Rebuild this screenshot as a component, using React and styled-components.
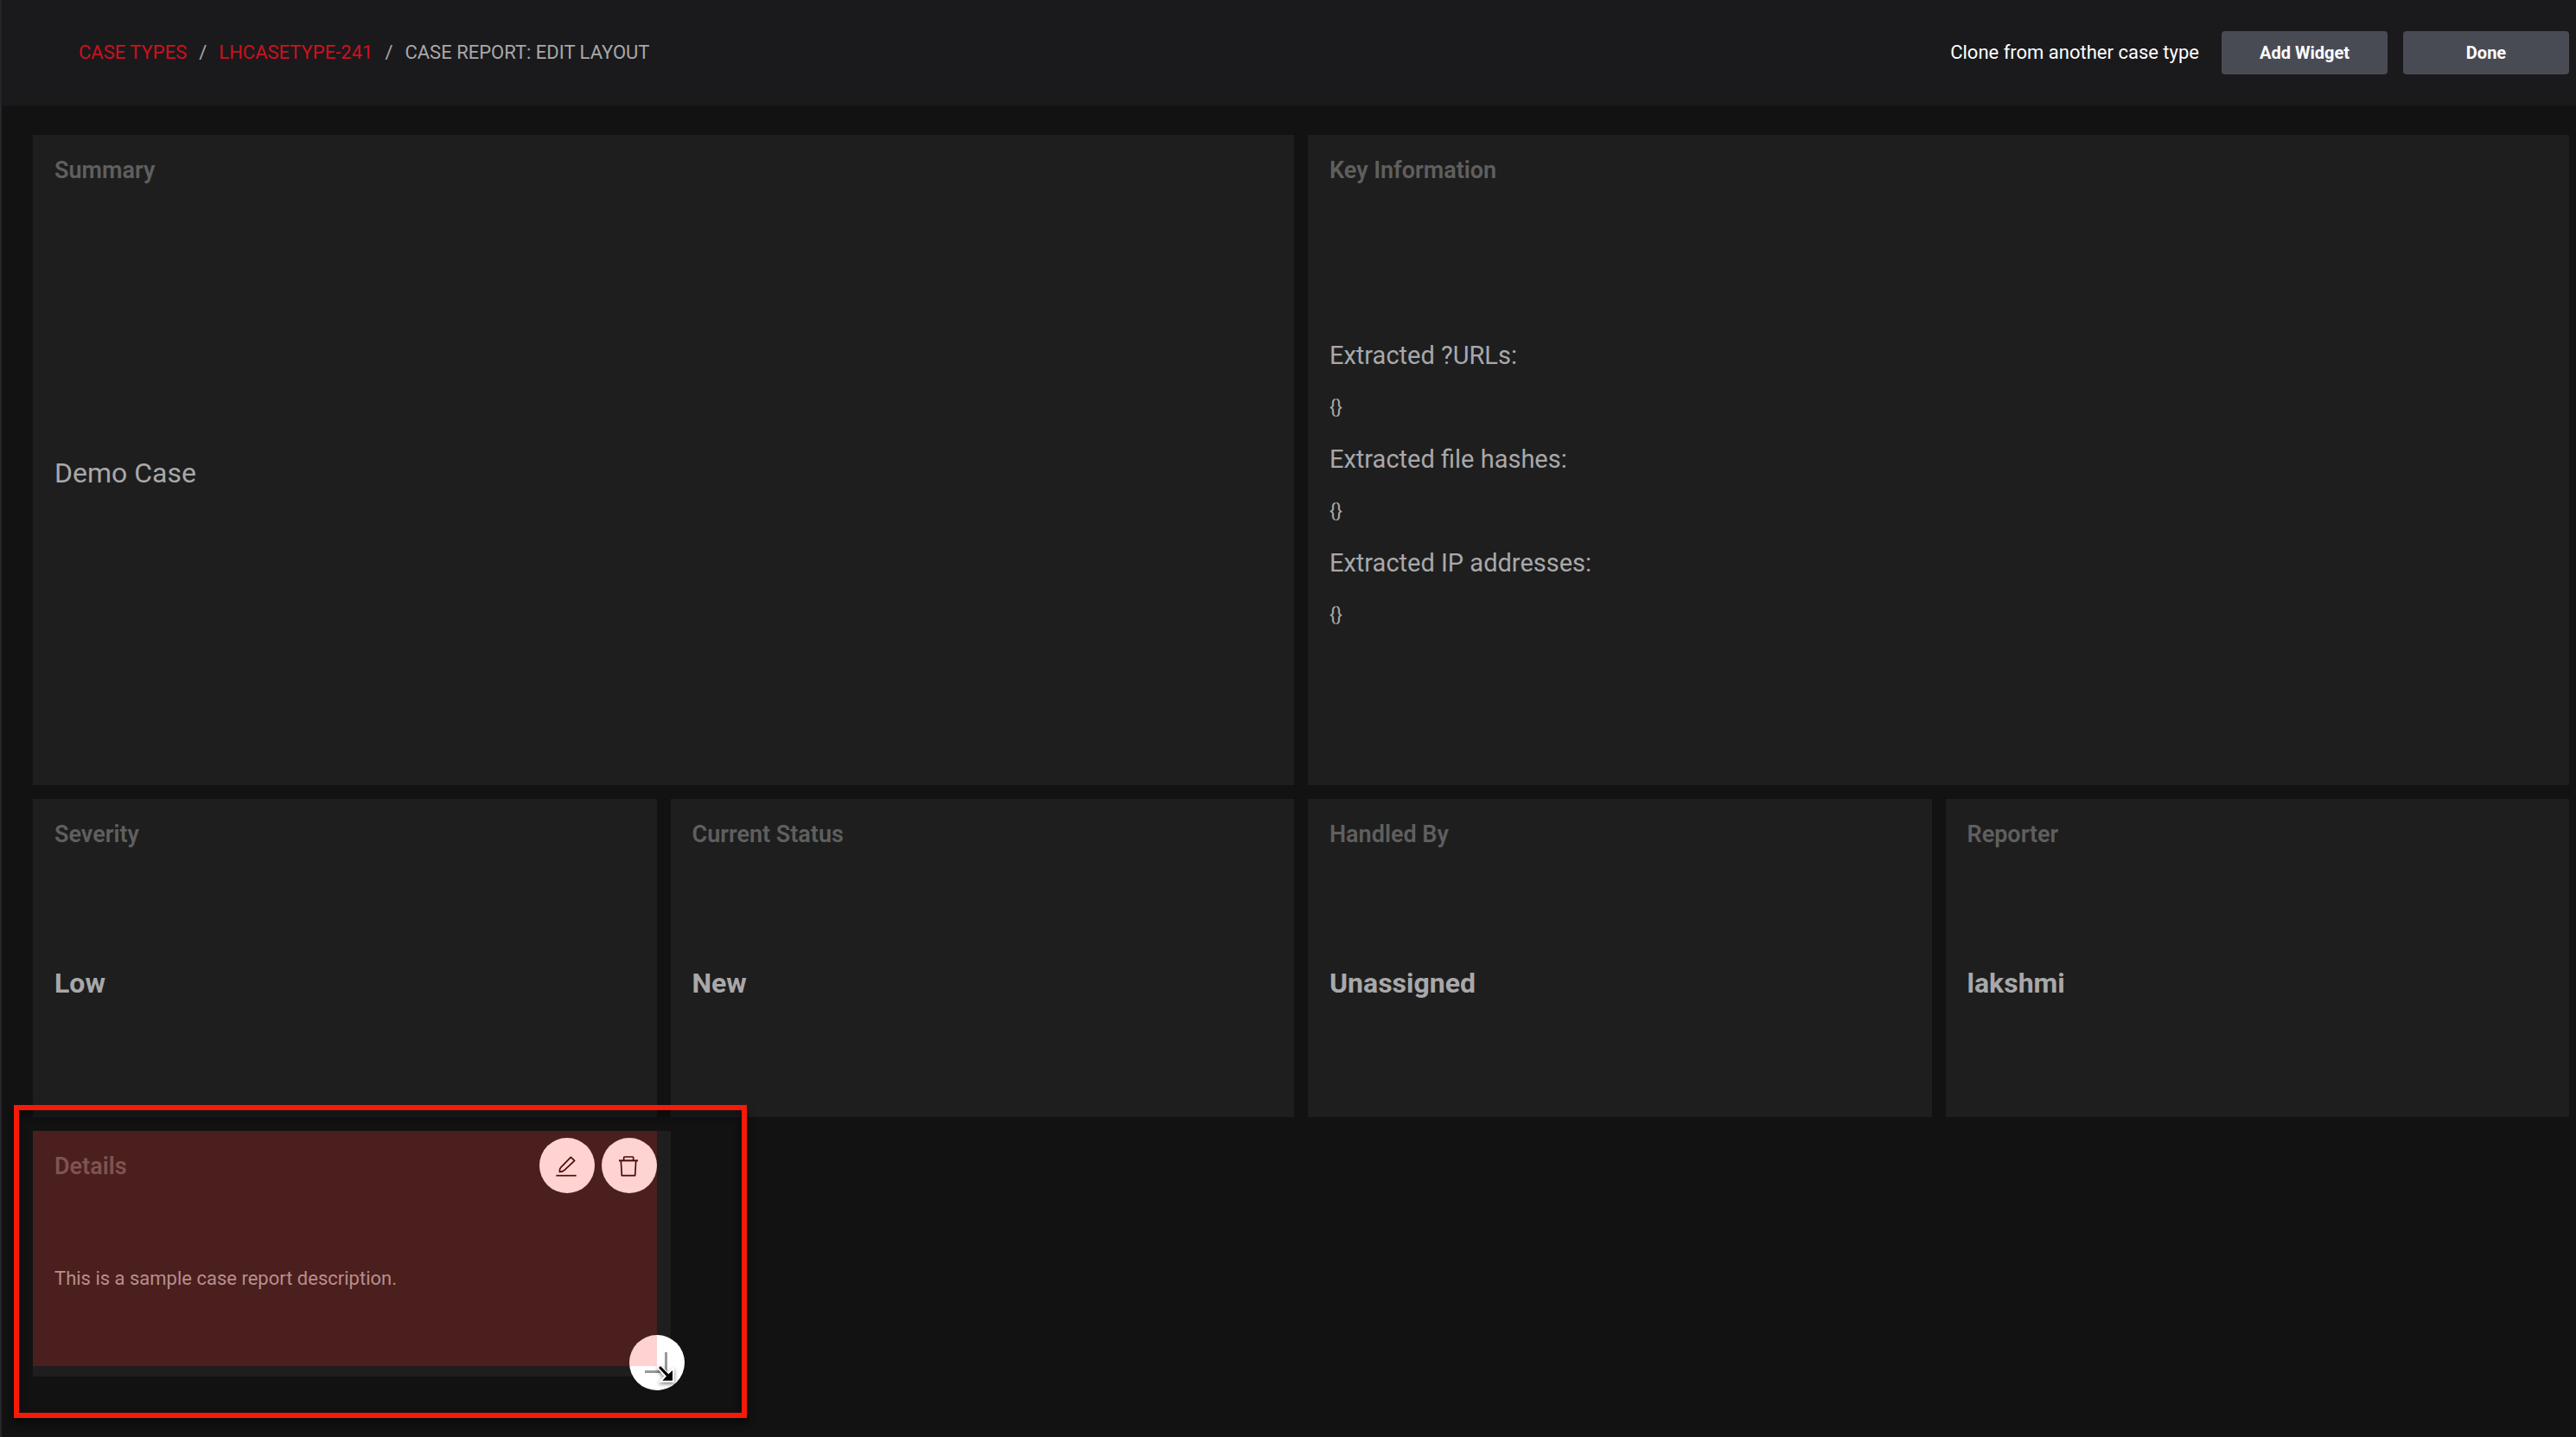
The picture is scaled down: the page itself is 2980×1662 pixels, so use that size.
import React from "react";
import styled, { createGlobalStyle } from "styled-components";

const GlobalStyle = createGlobalStyle`
  * {
    box-sizing: border-box;
  }

  body {
    margin: 0;
    background: #121212;
    color: #a8a8aa;
    font-family: Roboto, "Open Sans", sans-serif;
  }

  h2, h3, p {
    margin: 0;
  }
`;

const Page = styled.div`
  min-height: 100vh;
  border-left: 2px solid #25252b;
  overflow: hidden;
`;

const Header = styled.header`
  display: flex;
  align-items: center;
  justify-content: space-between;
  padding: 36px 8px 36px 89px;
  background: #1a1a1c;
`;

const Breadcrumb = styled.nav`
  display: flex;
  gap: 14px;
  font-size: 22px;
  line-height: 28px;
  text-transform: uppercase;
`;

const Crumb = styled.a`
  color: #cf101d;
  text-decoration: none;
`;

const Actions = styled.div`
  display: flex;
  align-items: center;
  gap: 18px;
`;

const CloneLink = styled.a`
  margin-right: 8px;
  color: #ffffff;
  font-size: 22px;
  line-height: 28px;
  text-decoration: none;
`;

const Button = styled.button`
  width: 192px;
  height: 50px;
  border: none;
  border-radius: 4px;
  background: #494b54;
  color: #ffffff;
  font-family: inherit;
  font-size: 20px;
  font-weight: 700;
`;

const Board = styled.main`
  display: grid;
  grid-template-columns: repeat(4, 1fr);
  grid-auto-rows: 368px;
  gap: 16px;
  padding: 34px 8px 0 36px;
`;

const Card = styled.section`
  position: relative;
  display: flex;
  flex-direction: column;
  grid-column: span ${props => (props.$large ? 2 : 1)};
  grid-row: span ${props => (props.$large ? 2 : 1)};
  padding: 25px 25px 0;
  background: #1e1e1e;
`;

const CardTitle = styled.h2`
  color: #5f5f5f;
  font-size: 27px;
  font-weight: 600;
  line-height: 32px;
`;

const CardBody = styled.div`
  display: flex;
  flex: 1;
  flex-direction: column;
  justify-content: center;
`;

const Value = styled.p`
  font-size: 32px;
  font-weight: 700;
  line-height: 40px;
`;

const SummaryText = styled.p`
  margin-bottom: 28px;
  font-size: 32px;
  line-height: 40px;
`;

const InfoHeading = styled.h3`
  font-size: 29px;
  font-weight: 400;
  line-height: 60px;
`;

const InfoValue = styled.p`
  font-size: 22px;
  line-height: 60px;
`;

const Description = styled.p`
  margin-top: 12px;
  font-size: 22px;
  line-height: 28px;
`;

// size the widget will snap to while it is being resized
const ResizeSlot = styled.div`
  position: relative;
  align-self: start;
  margin-right: -16px;
  padding: 0 16px 12px 0;
  background: #1e1e1e;
`;

const ActiveCard = styled(Card)`
  min-height: 272px;
`;

const Tint = styled.div`
  position: absolute;
  inset: 0;
  background: rgba(255, 34, 24, 0.2);
  pointer-events: none;
`;

const CardTools = styled.div`
  position: absolute;
  top: 8px;
  right: 0;
  display: flex;
  gap: 8px;
`;

const RoundButton = styled.button`
  width: 64px;
  height: 64px;
  padding: 0;
  border: none;
  border-radius: 50%;
  background: #ffffff;

  svg {
    display: block;
    width: 64px;
    height: 64px;
    overflow: visible;
  }
`;

const ResizeHandle = styled(RoundButton)`
  position: absolute;
  right: -32px;
  bottom: -28px;
`;

const Pointer = styled.svg`
  position: absolute;
  right: -32px;
  bottom: -28px;
  width: 64px;
  height: 64px;
  overflow: visible;
  filter: drop-shadow(0 2px 2px rgba(0, 0, 0, 0.5));
  pointer-events: none;
`;

const Highlight = styled.div`
  position: absolute;
  top: -30px;
  right: -88px;
  bottom: -48px;
  left: -22px;
  border: 6px solid #f71a08;
  filter: drop-shadow(0 6px 4px rgba(0, 0, 0, 0.6));
  pointer-events: none;
`;

const extracted = [
  { label: "Extracted ?URLs:", value: "{}" },
  { label: "Extracted file hashes:", value: "{}" },
  { label: "Extracted IP addresses:", value: "{}" }
];

const fields = [
  { title: "Severity", value: "Low" },
  { title: "Current Status", value: "New" },
  { title: "Handled By", value: "Unassigned" },
  { title: "Reporter", value: "lakshmi" }
];

function EditIcon() {
  return (
    <svg viewBox="0 0 192 192" fill="none" stroke="#1c0606" strokeWidth="5">
      <path d="M109 67L122 79L86 113Q80 118 70 118Q69 108 74 103Z" strokeLinejoin="round" />
      <path d="M58 131H128" />
    </svg>
  );
}

function TrashIcon() {
  return (
    <svg viewBox="0 0 192 192" fill="none" stroke="#1c0606" strokeWidth="5">
      <path d="M60 79H126" strokeWidth="6" />
      <path d="M77 78V68Q77 66 79 66H108Q110 66 110 68V78" />
      <path d="M67 80L70 131H116L119 80" strokeLinejoin="round" />
    </svg>
  );
}

function DetailsWidget() {
  return (
    <ResizeSlot>
      <ActiveCard>
        <CardTitle>Details</CardTitle>
        <CardBody>
          <Description>This is a sample case report description.</Description>
        </CardBody>
        <CardTools>
          <RoundButton type="button" aria-label="Edit widget">
            <EditIcon />
          </RoundButton>
          <RoundButton type="button" aria-label="Delete widget">
            <TrashIcon />
          </RoundButton>
        </CardTools>
        <ResizeHandle type="button" aria-label="Resize widget">
          <svg viewBox="0 0 64 64">
            <path d="M41 20H44V44H18V41H41Z" fill="#999999" />
          </svg>
        </ResizeHandle>
        <Tint />
        <Pointer viewBox="0 0 192 192">
          <path d="M96 114L108 103L134 129L156 110V164H101L120 143Z" fill="#ffffff" />
          <path d="M102 114L108 108L136 136L150 123V158H115L129 143Z" fill="#000000" />
        </Pointer>
      </ActiveCard>
      <Highlight />
    </ResizeSlot>
  );
}

function App() {
  return (
    <Page>
      <GlobalStyle />
      <Header>
        <Breadcrumb aria-label="Breadcrumb">
          <Crumb href="#case-types">Case Types</Crumb>
          <span>/</span>
          <Crumb href="#lhcasetype-241">LHCASETYPE-241</Crumb>
          <span>/</span>
          <span>Case Report: Edit Layout</span>
        </Breadcrumb>
        <Actions>
          <CloneLink href="#clone">Clone from another case type</CloneLink>
          <Button type="button">Add Widget</Button>
          <Button type="button">Done</Button>
        </Actions>
      </Header>

      <Board>
        <Card $large>
          <CardTitle>Summary</CardTitle>
          <CardBody>
            <SummaryText>Demo Case</SummaryText>
          </CardBody>
        </Card>
        <Card $large>
          <CardTitle>Key Information</CardTitle>
          <CardBody>
            {extracted.map(item => (
              <React.Fragment key={item.label}>
                <InfoHeading>{item.label}</InfoHeading>
                <InfoValue>{item.value}</InfoValue>
              </React.Fragment>
            ))}
          </CardBody>
        </Card>
        {fields.map(field => (
          <Card key={field.title}>
            <CardTitle>{field.title}</CardTitle>
            <CardBody>
              <Value>{field.value}</Value>
            </CardBody>
          </Card>
        ))}
        <DetailsWidget />
      </Board>
    </Page>
  );
}

export default App;
